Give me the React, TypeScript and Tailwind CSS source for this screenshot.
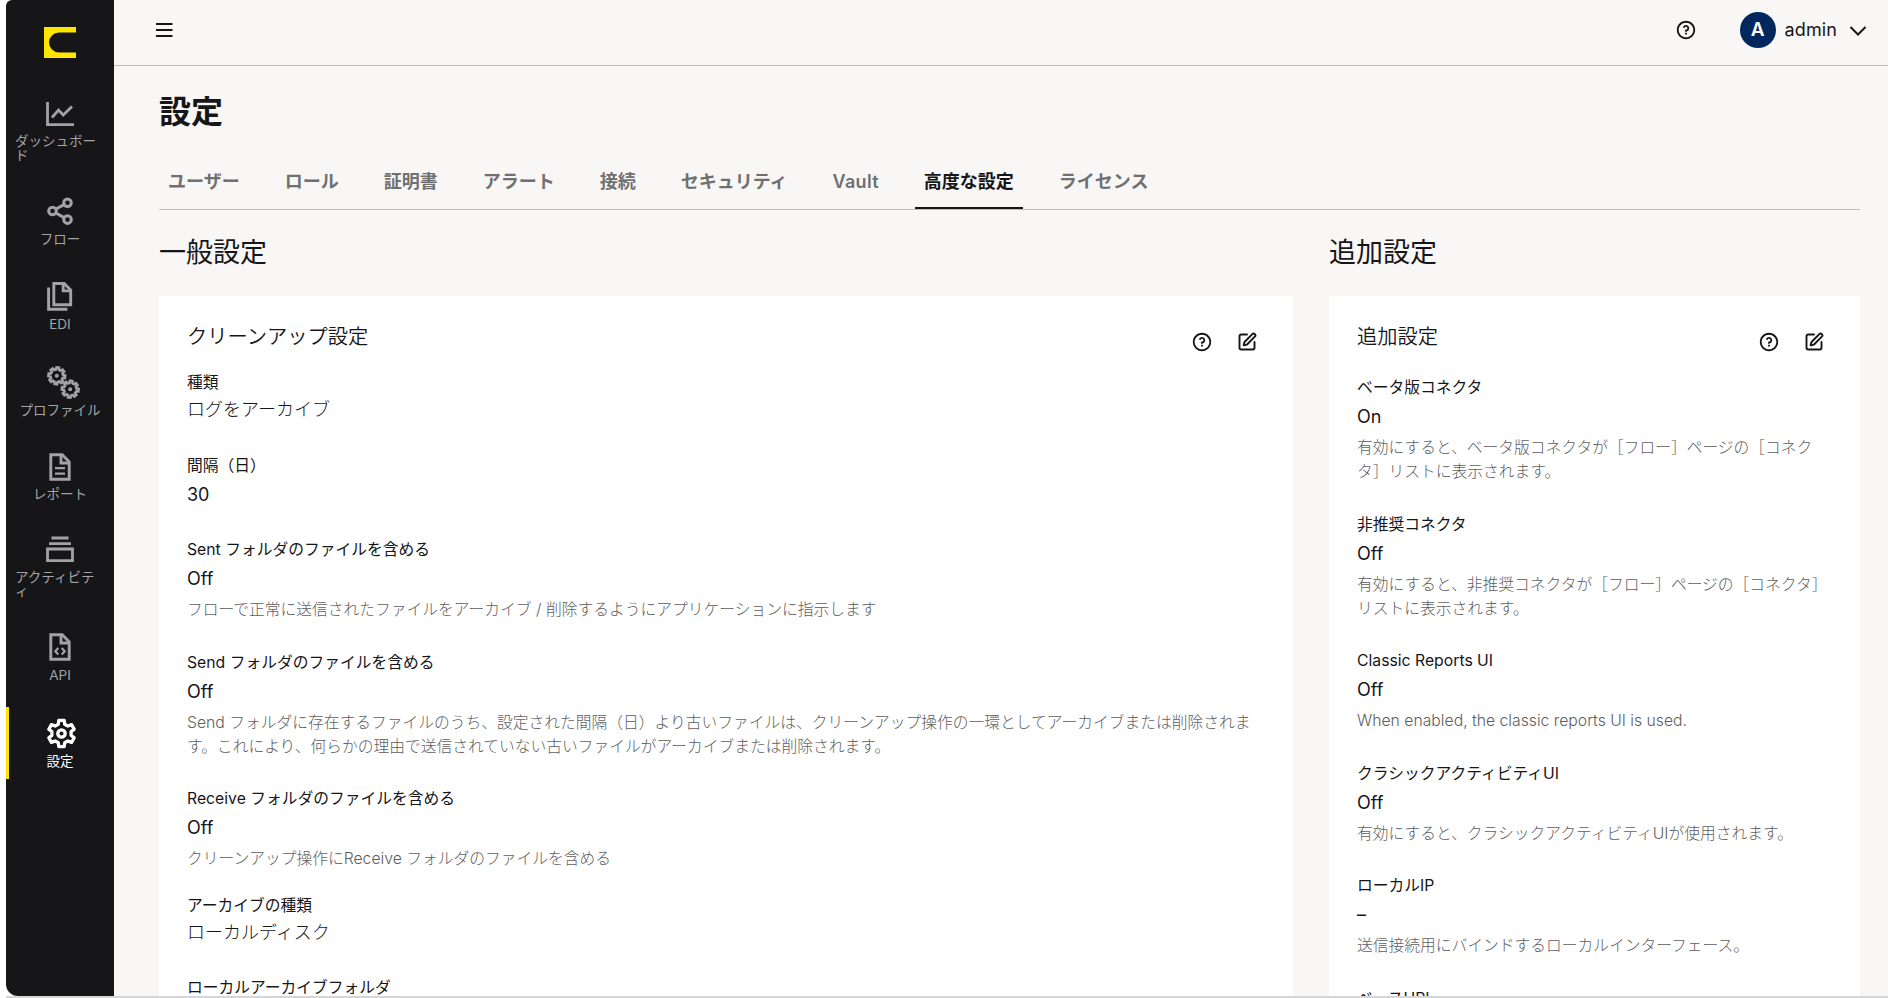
import type { ReactNode } from 'react';
import { SquarePen } from 'lucide-react';
import { RiQuestionLine } from 'react-icons/ri';

interface Field {
  label: string;
  value: string;
  desc?: string;
  height: string;
}

interface NavItem {
  label: string;
  icon: ReactNode;
  className?: string;
  active?: boolean;
}

// Outline of a cog centred on (cx, cy)
function gearPath(cx: number, cy: number, outer: number, inner: number, teeth: number, offset = 0) {
  const step = (Math.PI * 2) / teeth;
  const points: string[] = [];
  for (let i = 0; i < teeth; i++) {
    const a = i * step + offset;
    const corners: [number, number][] = [
      [inner, -0.32],
      [outer, -0.19],
      [outer, 0.19],
      [inner, 0.32],
    ];
    for (const [r, t] of corners) {
      const angle = a + t * step;
      points.push(`${(cx + r * Math.cos(angle)).toFixed(2)} ${(cy + r * Math.sin(angle)).toFixed(2)}`);
    }
  }
  return `M${points.join('L')}Z`;
}

const ChartIcon = () => (
  <svg width="28" height="26" viewBox="0 0 28 26" fill="none" stroke="currentColor" strokeWidth="2.8">
    <path d="M1.5 1v22.7H28" />
    <path d="M6 16.5 12.5 9l4.7 5L26 5.5" />
  </svg>
);

const ShareIcon = () => (
  <svg width="27" height="28" viewBox="0 0 27 28" fill="none" stroke="currentColor" strokeWidth="3">
    <circle cx="20.5" cy="5.7" r="3.8" />
    <circle cx="5.5" cy="14" r="3.8" />
    <circle cx="20.5" cy="22.6" r="3.8" />
    <path d="m9 12 8-4.4M9 16l8 4.6" />
  </svg>
);

const PagesIcon = () => (
  <svg width="26" height="29" viewBox="0 0 26 29" fill="none" stroke="currentColor" strokeWidth="2.9">
    <path d="M6.8 1.5h10.4l6.5 6.6v14.6H6.8z" />
    <path d="M16.2 1.5v7.4h7.5" />
    <path d="M1.6 5.5v21.7h18.8" />
  </svg>
);

const GearsIcon = () => (
  <svg className="ml-1.5" width="33" height="33" viewBox="0 0 33 33" fill="none" stroke="currentColor" strokeWidth="2.6">
    <path d={gearPath(9.8, 9.8, 8.4, 6.3, 8, 0.12)} />
    <circle cx="9.8" cy="9.8" r="1.1" strokeWidth="1.8" />
    <path d={gearPath(23.2, 23.2, 8.4, 6.3, 8, 0.12)} />
    <circle cx="23.2" cy="23.2" r="1.1" strokeWidth="1.8" />
  </svg>
);

const FileIcon = ({ children }: { children: ReactNode }) => (
  <svg width="22" height="28" viewBox="0 0 22 28" fill="none" stroke="currentColor" strokeWidth="2.9">
    <path d="M1.8 1.8h11.4l7 7v17.4H1.8z" />
    <path d="M12 1.8V10h8.2" />
    {children}
  </svg>
);

const StackIcon = () => (
  <svg width="28" height="27" viewBox="0 0 28 27" fill="none" stroke="currentColor" strokeWidth="2.8">
    <path d="M5.5 2h17M3 7.7h22M1.5 13h25v11.7h-25z" />
  </svg>
);

const CogIcon = () => (
  <svg className="ml-0.5" width="31" height="31" viewBox="0 0 31 31" fill="none" stroke="currentColor" strokeWidth="3.3" strokeLinejoin="round">
    <path d={gearPath(15.5, 15.5, 13.4, 9.8, 6, Math.PI / 2)} />
    <circle cx="15.5" cy="15.5" r="3.7" />
  </svg>
);

const NAV: NavItem[] = [
  { label: 'ダッシュボード', icon: <ChartIcon />, className: 'h-[85.5px] pt-[14px]' },
  { label: 'フロー', icon: <ShareIcon />, className: 'h-[72px] pt-[12.5px]' },
  { label: 'EDI', icon: <PagesIcon />, className: 'h-[72px] pt-[12.5px]' },
  { label: 'プロファイル', icon: <GearsIcon />, className: 'h-[72px] pt-[12.5px]' },
  { label: 'レポート', icon: <FileIcon><path d="M6 15.2h10M6 20.6h10" strokeWidth="2.2" /></FileIcon>, className: 'h-[72px] pt-[11.5px]' },
  { label: 'アクティビティ', icon: <StackIcon />, className: 'h-[80.5px] pt-[9px]' },
  {
    label: 'API',
    icon: <FileIcon><path d="m9.3 15-3 3.3 3 3.3M12.7 15l3 3.3-3 3.3" strokeWidth="2.2" /></FileIcon>,
    className: 'h-[72px] pt-[12.5px]',
  },
  { label: '設定', icon: <CogIcon />, className: 'h-[72px] pt-[13px]', active: true },
];

const TABS = ['ユーザー', 'ロール', '証明書', 'アラート', '接続', 'セキュリティ', 'Vault', '高度な設定', 'ライセンス'];

const CLEANUP: Field[] = [
  { label: '種類', value: 'ログをアーカイブ', height: 'h-[82.5px]' },
  { label: '間隔（日）', value: '30', height: 'h-[84.5px]' },
  {
    label: 'Sent フォルダのファイルを含める',
    value: 'Off',
    desc: 'フローで正常に送信されたファイルをアーカイブ / 削除するようにアプリケーションに指示します',
    height: 'h-[112.5px]',
  },
  {
    label: 'Send フォルダのファイルを含める',
    value: 'Off',
    desc: 'Send フォルダに存在するファイルのうち、設定された間隔（日）より古いファイルは、クリーンアップ操作の一環としてアーカイブまたは削除されます。これにより、何らかの理由で送信されていない古いファイルがアーカイブまたは削除されます。',
    height: 'h-[136.5px]',
  },
  {
    label: 'Receive フォルダのファイルを含める',
    value: 'Off',
    desc: 'クリーンアップ操作にReceive フォルダのファイルを含める',
    height: 'h-[107px]',
  },
  { label: 'アーカイブの種類', value: 'ローカルディスク', height: 'h-[81.5px]' },
  { label: 'ローカルアーカイブフォルダ', value: '', height: 'h-[84.5px]' },
];

const ADDITIONAL: Field[] = [
  {
    label: 'ベータ版コネクタ',
    value: 'On',
    desc: '有効にすると、ベータ版コネクタが［フロー］ページの［コネクタ］リストに表示されます。',
    height: 'h-[136.5px]',
  },
  {
    label: '非推奨コネクタ',
    value: 'Off',
    desc: '有効にすると、非推奨コネクタが［フロー］ページの［コネクタ］リストに表示されます。',
    height: 'h-[136.5px]',
  },
  { label: 'Classic Reports UI', value: 'Off', desc: 'When enabled, the classic reports UI is used.', height: 'h-[112.5px]' },
  {
    label: 'クラシックアクティビティUI',
    value: 'Off',
    desc: '有効にすると、クラシックアクティビティUIが使用されます。',
    height: 'h-[112.5px]',
  },
  { label: 'ローカルIP', value: '–', desc: '送信接続用にバインドするローカルインターフェース。', height: 'h-[112.5px]' },
  { label: 'ベースURL', value: '', height: 'h-[112.5px]' },
];

function FieldRow({ label, value, desc, height }: Field) {
  const wideValue = value.length > 3;
  return (
    <div className={`shrink-0 ${height}`}>
      <div className="text-[15.75px] leading-6 font-[430]">{label}</div>
      <div className={`text-lg leading-[27px] ${wideValue ? 'mt-[0.5px] font-light' : 'mt-[3px] font-[380]'}`}>{value}</div>
      {desc && <p className="mt-1.5 text-[15.75px] leading-6 text-[#5e5e5e] font-light break-all">{desc}</p>}
    </div>
  );
}

function SettingsCard({ title, fields, listClass }: { title: string; fields: Field[]; listClass: string }) {
  return (
    <section className="flex-1 min-h-0 overflow-hidden bg-white pl-7 pt-[27px] pr-9">
      <div className="flex justify-between">
        <h3 className="text-[20.25px] leading-7 font-[350]">{title}</h3>
        <div className="flex gap-6 mt-2">
          <button aria-label="ヘルプ"><RiQuestionLine size={22} /></button>
          <button aria-label="編集"><SquarePen size={20} strokeWidth={2.3} /></button>
        </div>
      </div>
      <div className={`flex flex-col ${listClass}`}>
        {fields.map((f) => <FieldRow key={f.label} {...f} />)}
      </div>
    </section>
  );
}

export default function App() {
  return (
    <div className="h-[998px] w-full overflow-hidden bg-white pl-1.5 flex flex-col text-[#161619] font-['Inter','Noto_Sans_CJK_JP',sans-serif]">
      <div className="flex-1 min-h-0 flex overflow-hidden rounded-bl-xl rounded-tl-md bg-[#f8f7f6]">
        <aside className="w-[108px] shrink-0 bg-[#161619] flex flex-col">
          <div className="pl-[38px] pt-[27px] h-[86px]">
            <svg width="32" height="31" viewBox="0 0 32 31">
              <path fill="#ffe500" d="M0 0h32v5.5H15a10 10 0 0 0 0 20h17V31H0z" />
            </svg>
          </div>
          <nav className="flex flex-col gap-[13.5px]">
            {NAV.map(({ label, icon, className, active }) => (
              <a
                key={label}
                className={`flex flex-col items-center px-[9px] shrink-0 ${className} ${
                  active ? 'text-white shadow-[inset_3px_0_0_#ffe500]' : 'text-[#a3a3a4]'
                }`}
              >
                <span className="h-[27px] flex items-center justify-center">{icon}</span>
                <span className="mt-2 text-[13.5px] leading-[13.5px] max-w-[90px] break-all">{label}</span>
              </a>
            ))}
          </nav>
        </aside>

        <div className="flex-1 min-w-0 flex flex-col">
          <header className="h-[66px] shrink-0 border-b border-[#bdbdbd] flex items-center pl-[42px] pr-[21px] pb-[5px]">
            <svg width="17" height="14" viewBox="0 0 17 14" stroke="currentColor" strokeWidth="1.8">
              <path d="M0 1h16.5M0 7h16.5M0 13h16.5" />
            </svg>
            <div className="ml-auto flex items-center">
              <RiQuestionLine size={22} />
              <span className="ml-[43px] size-9 rounded-full bg-[#00285e] text-white text-[19px] font-semibold flex items-center justify-center">
                A
              </span>
              <span className="ml-[9px] text-lg tracking-[0.1px]">admin</span>
              <svg className="ml-3 mt-0.5" width="18" height="12" viewBox="0 0 18 12" fill="none" stroke="currentColor" strokeWidth="2">
                <path d="m1.5 2 7.5 7.5L16.5 2" />
              </svg>
            </div>
          </header>

          <main className="flex-1 min-h-0 flex flex-col pl-[45px] pr-7">
            <h1 className="mt-[23px] text-[32px] leading-[46px] font-bold">設定</h1>
            <div className="mt-5 h-[55px] shrink-0 border-b border-[#bdbdbd] flex gap-[27px]">
              {TABS.map((tab) => (
                <button
                  key={tab}
                  className={`px-[9px] pt-[2px] text-lg font-semibold border-b-2 ${
                    tab === '高度な設定' ? 'border-[#161619]' : 'border-transparent text-[#707070]'
                  } ${tab === 'Vault' ? 'tracking-[0.3px]' : ''}`}
                >
                  {tab}
                </button>
              ))}
            </div>

            <div className="flex-1 min-h-0 flex gap-9">
              <div className="w-[1134px] shrink-0 flex flex-col">
                <h2 className="mt-[23px] mb-[23px] text-[27px] leading-10 font-[380]">一般設定</h2>
                <SettingsCard title="クリーンアップ設定" fields={CLEANUP} listClass="mt-[18px]" />
              </div>
              <div className="flex-1 min-w-0 flex flex-col">
                <h2 className="mt-[23px] mb-[23px] text-[27px] leading-10 font-[380]">追加設定</h2>
                <SettingsCard title="追加設定" fields={ADDITIONAL} listClass="mt-[23px]" />
              </div>
            </div>
          </main>
        </div>
      </div>
      <div className="h-0.5 shrink-0 bg-[#d6d6d6]" />
    </div>
  );
}
